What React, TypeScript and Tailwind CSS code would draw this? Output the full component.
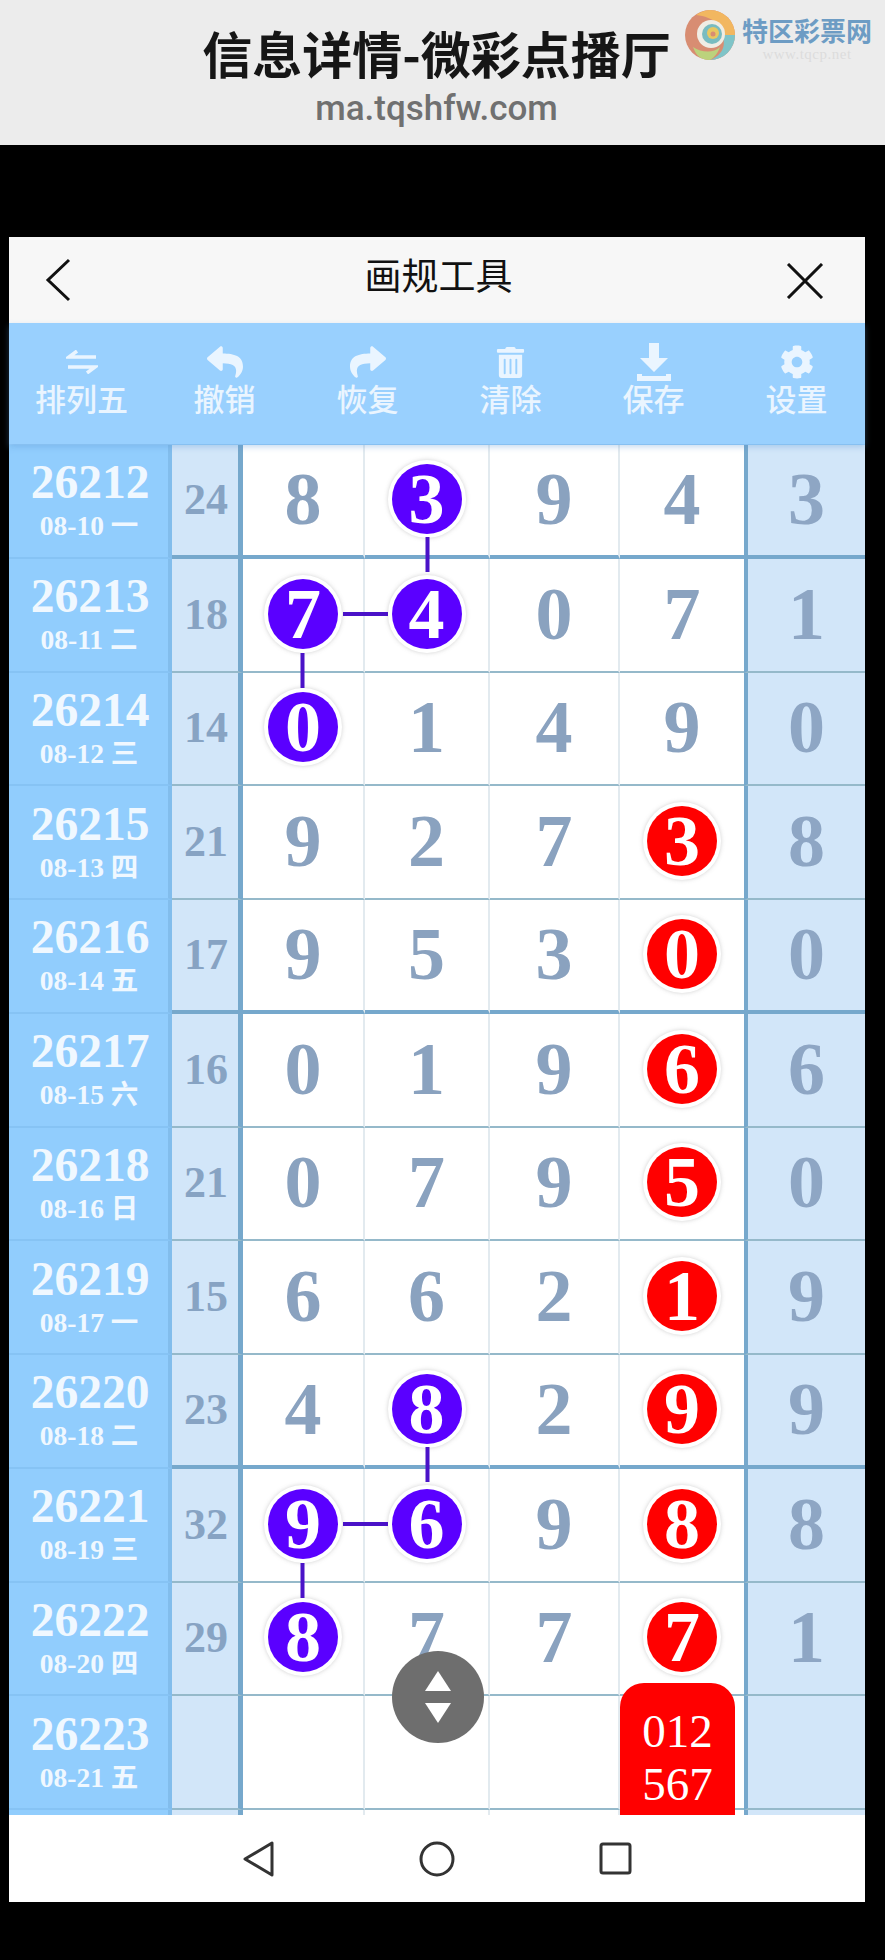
import React from 'react';
import { FaReply, FaShare, FaTrashAlt, FaCog } from 'react-icons/fa';

type Row = {
  id: string;
  date: string;
  sum: string;
  nums: string[];
  purple?: number[];
  red?: boolean;
  last: string;
  thick?: boolean;
};

const rows: Row[] = [
  { id: '26212', date: '08-10 一', sum: '24', nums: ['8', '3', '9', '4'], purple: [1], last: '3', thick: true },
  { id: '26213', date: '08-11 二', sum: '18', nums: ['7', '4', '0', '7'], purple: [0, 1], last: '1' },
  { id: '26214', date: '08-12 三', sum: '14', nums: ['0', '1', '4', '9'], purple: [0], last: '0' },
  { id: '26215', date: '08-13 四', sum: '21', nums: ['9', '2', '7', '3'], red: true, last: '8' },
  { id: '26216', date: '08-14 五', sum: '17', nums: ['9', '5', '3', '0'], red: true, last: '0', thick: true },
  { id: '26217', date: '08-15 六', sum: '16', nums: ['0', '1', '9', '6'], red: true, last: '6' },
  { id: '26218', date: '08-16 日', sum: '21', nums: ['0', '7', '9', '5'], red: true, last: '0' },
  { id: '26219', date: '08-17 一', sum: '15', nums: ['6', '6', '2', '1'], red: true, last: '9' },
  { id: '26220', date: '08-18 二', sum: '23', nums: ['4', '8', '2', '9'], purple: [1], red: true, last: '9', thick: true },
  { id: '26221', date: '08-19 三', sum: '32', nums: ['9', '6', '9', '8'], purple: [0, 1], red: true, last: '8' },
  { id: '26222', date: '08-20 四', sum: '29', nums: ['8', '7', '7', '7'], purple: [0], red: true, last: '1' },
  { id: '26223', date: '08-21 五', sum: '', nums: ['', '', '', ''], last: '' },
  { id: '', date: '', sum: '', nums: ['', '', '', ''], last: '' },
];

const serif = 'font-["Liberation_Serif","Noto_Sans_CJK_SC",serif]';

const Ball = ({ value, red }: { value: string; red?: boolean }) => (
  <div className="w-[78px] h-[78px] rounded-full bg-white flex items-center justify-center shadow-[0_0_4px_rgba(120,120,120,0.35)]">
    <div className={`w-[70px] h-[70px] rounded-full flex items-center justify-center text-white text-[72px] font-bold leading-none ${red ? 'bg-[#ff0000]' : 'bg-[#5a00ff]'}`}>
      {value}
    </div>
  </div>
);

const TableRow = ({ row }: { row: Row }) => {
  const line = row.thick ? 'border-b-4 border-[#76a8cc]' : 'border-b-2 border-[#95b9ca]';
  return (
    <div className={`grid grid-cols-[163px_71px_122px_125px_130px_124px_121px] h-[113.75px] ${serif}`}>
      <div className="flex flex-col items-center justify-center bg-[#91cdfd] border-r-4 border-r-[#82bdec] border-b-2 border-b-[#86c3f4] text-[#f0f8ff] font-bold pb-[3px]">
        <div className="text-[47.5px] leading-[53px] pl-[3px]">{row.id}</div>
        <div className="text-[27.5px] leading-[33px] pl-[1px]">{row.date}</div>
      </div>
      <div className={`flex items-center justify-center bg-[#d2e6f9] text-[#87a3c3] text-[44px] font-bold border-r-[5px] border-r-[#76a8cc] pl-[2px] ${line}`}>
        {row.sum}
      </div>
      {row.nums.map((n, i) => {
        const isPurple = row.purple?.includes(i);
        const isRed = row.red && i === 3;
        return (
          <div key={i} className={`relative flex items-center justify-center bg-white text-[#8aa2bf] text-[74px] font-bold leading-none pb-[2px] ${i < 3 ? 'border-r-2 border-r-[#e2eaef]' : ''} ${line}`}>
            {isPurple || isRed ? <Ball value={n} red={isRed} /> : n}
            {row.id === '26223' && i === 3 && (
              <div className="absolute left-0 top-[-13px] w-[115px] h-[150px] z-10 rounded-t-[24px] bg-[#ff0000] text-white text-[47px] font-normal leading-[53px] text-center pt-[22px]">
                012
                <br />
                567
              </div>
            )}
          </div>
        );
      })}
      <div className={`flex items-center justify-center bg-[#d2e6f9] text-[#8ea6c4] text-[74px] font-bold leading-none border-l-4 border-l-[#76a8cc] pb-[2px] ${line}`}>
        {row.last}
      </div>
    </div>
  );
};

const ToolItem = ({ icon, label }: { icon: React.ReactNode; label: string }) => (
  <div className="flex flex-col items-center text-[#eaf5ff]">
    <div className="h-[36px] flex items-center justify-center">{icon}</div>
    <div className="text-[31px] leading-[36px] font-medium">{label}</div>
  </div>
);

// 特区彩票 swirl, top right of the grey header
const SwirlLogo = () => (
  <svg width="52" height="52" viewBox="0 0 52 52" className="block">
    <circle cx="26" cy="26" r="25" fill="#d88d72" />
    <path d="M26 1A25 25 0 0 1 51 26L38 30C38 16 30 8 12 6A25 25 0 0 1 26 1Z" fill="#f2b760" />
    <path d="M51 26A25 25 0 0 1 26 51C34 48 44 40 38 26Z" fill="#7fc4c8" />
    <path d="M26 51C16 51 12 46 9 38C18 44 30 44 36 38C34 44 30 49 26 51Z" fill="#bcd27c" />
    <circle cx="27" cy="25" r="14" fill="#f0ede4" />
    <circle cx="28" cy="25" r="10" fill="#79bcc0" />
    <circle cx="29" cy="24" r="6" fill="#e8c860" />
    <circle cx="29" cy="25" r="2.5" fill="#d88d72" />
  </svg>
);

export default function App() {
  return (
    <div className="relative w-[885px] h-[1960px] bg-black overflow-hidden font-['Noto_Sans_CJK_SC',sans-serif]">
      {/* top label */}
      <div className="relative h-[145px] bg-[#ececec] flex flex-col items-center pr-[12px]">
        <div className="mt-[22px] text-[50px] leading-[60px] font-bold text-[#161616] whitespace-nowrap">信息详情-微彩点播厅</div>
        <div className="mt-[4px] text-[35px] leading-[46px] font-medium text-[#707070] font-['Roboto',sans-serif]">ma.tqshfw.com</div>
        <div className="absolute left-[684px] top-[9px] flex items-start gap-[6px]">
          <SwirlLogo />
          <div className="pt-[5px]">
            <div className="text-[26px] leading-[32px] font-bold text-[#6d9cc4] whitespace-nowrap">特区彩票网</div>
            <div className="text-[15px] leading-[16px] text-[#dcdcdc] font-['Liberation_Serif',serif] tracking-[0.5px] text-center">www.tqcp.net</div>
          </div>
        </div>
      </div>

      <div className="h-[92px]" />

      <div className="relative ml-[9px] w-[856px] flex flex-col">
        {/* title bar */}
        <div className="h-[86px] bg-[#f7f7f7] grid grid-cols-[1fr_auto_1fr] items-center pl-[40px] pr-[37px]">
          <svg width="28" height="44" viewBox="0 0 28 44" fill="none" stroke="#111" strokeWidth="3" className="-ml-[4px]">
            <path d="M24 2 3 22l21 20" />
          </svg>
          <div className="text-[37px] leading-[48px] text-[#111] pb-[12px]">画规工具</div>
          <svg width="38" height="36" viewBox="0 0 38 36" fill="none" stroke="#111" strokeWidth="3" className="justify-self-end mt-[2px] mr-[4px]">
            <path d="M2 1l34 34M36 1 2 35" />
          </svg>
        </div>

        {/* toolbar */}
        <div className="relative z-20 h-[121px] bg-[#99d0fe] grid grid-cols-[repeat(6,143px)] pt-[21px] pl-[1px] shadow-[0_3px_6px_rgba(90,150,210,0.35)]">
          <ToolItem
            label="排列五"
            icon={
              <svg width="32" height="24" viewBox="0 0 32 24" fill="none" stroke="#eaf5ff" strokeWidth="3.5">
                <path d="M30 7H3l8-6M2 17h27l-8 6" />
              </svg>
            }
          />
          <ToolItem label="撤销" icon={<FaReply size={36} />} />
          <ToolItem label="恢复" icon={<FaShare size={36} />} />
          <ToolItem label="清除" icon={<FaTrashAlt size={31} />} />
          <ToolItem
            label="保存"
            icon={
              <svg width="38" height="38" viewBox="0 0 38 38" fill="#eaf5ff">
                <path d="M14 0h10v15h9L19 29 5 15h9zM2 31h5v2h24v-2h5v7H2z" />
              </svg>
            }
          />
          <ToolItem label="设置" icon={<FaCog size={34} />} />
        </div>

        {/* lottery table */}
        <div className="relative h-[1371px] overflow-hidden pt-[1px] bg-[#99d0fe]">
          {rows.map((r, i) => (
            <TableRow key={i} row={r} />
          ))}
          <svg width="856" height="1371" className="absolute left-0 top-0 pointer-events-none">
            <g stroke="#4a12c8" strokeWidth="4">
              <path d="M418.5 93v35M334 170h45M293.5 209v35" />
              <path d="M418.5 1003v35M334 1080h45M293.5 1119v35" />
            </g>
          </svg>
          {/* floating up/down button */}
          <div className="absolute left-[383px] top-[1207px] z-20 w-[92px] h-[92px] rounded-full bg-[#6e6e6e] flex flex-col items-center justify-center gap-[12px]">
            <svg width="28" height="20" viewBox="0 0 28 20" fill="white"><path d="M14 0 27 20H1z" /></svg>
            <svg width="28" height="20" viewBox="0 0 28 20" fill="white"><path d="M1 0h26L14 20z" /></svg>
          </div>
        </div>

        {/* android nav bar */}
        <div className="relative z-20 h-[87px] bg-white flex items-center pl-[234px] gap-[144px]">
          <svg width="32" height="36" viewBox="0 0 32 36" fill="none" stroke="#333" strokeWidth="3" strokeLinejoin="round">
            <path d="M29 2v32L2 18z" />
          </svg>
          <svg width="36" height="36" viewBox="0 0 36 36" fill="none" stroke="#333" strokeWidth="3"><circle cx="18" cy="18" r="16" /></svg>
          <svg width="34" height="34" viewBox="0 0 34 34" fill="none" stroke="#333" strokeWidth="3">
            <rect x="2" y="2" width="29" height="29" rx="2" />
          </svg>
        </div>
      </div>
    </div>
  );
}
